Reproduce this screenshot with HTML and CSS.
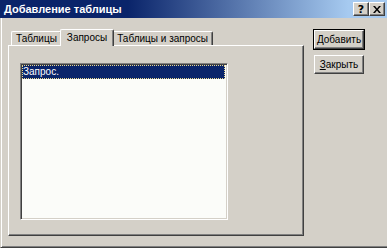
FILE: index.html
```html
<!DOCTYPE html>
<html lang="ru">

<head>
    <meta charset="UTF-8">
    <title>Добавление таблицы</title>
    <link rel="stylesheet" href="styles.css">
</head>

<body>
    <div class="window">
        <div class="titlebar">
            <span class="caption">Добавление таблицы</span>
            <div class="caption-buttons">
                <button class="cap-btn help">?</button>
                <button class="cap-btn close">
                    <svg width="8" height="7" viewBox="0 0 8 7">
                        <path d="M0 0h2l2 2.5 2-2.5h2l-3 3.5 3 3.5h-2l-2-2.5-2 2.5h-2l3-3.5z" fill="#000"/>
                    </svg>
                </button>
            </div>
        </div>
        <div class="client">
            <div class="left">
                <div class="tabs">
                    <div class="tab">Таблицы</div>
                    <div class="tab active">Запросы</div>
                    <div class="tab">Таблицы и запросы</div>
                </div>
                <div class="panel">
                    <div class="listbox">
                        <div class="item selected">Запрос.</div>
                    </div>
                </div>
            </div>
            <div class="actions">
                <button class="btn default"><u>Д</u>обавить</button>
                <button class="btn"><u>З</u>акрыть</button>
            </div>
        </div>
    </div>
</body>

</html>
```

FILE: styles.css
```css
body {
    margin: 0;
    font-family: "Liberation Sans", Arial, sans-serif;
    font-size: 10px;
    background-color: #d4d0c8;
}

.window {
    width: 387px;
    height: 248px;
    display: flex;
    flex-direction: column;
    background-color: #d4d0c8;
    overflow: hidden;
}

/* title bar */
.titlebar {
    height: 18px;
    flex: none;
    display: flex;
    align-items: center;
    justify-content: space-between;
    padding: 0 2px 0 4px;
    background: linear-gradient(to right, #0a246a 0%, #0a246a 33%, #a6caf0 90%, #a6caf0 100%);
    color: #ffffff;
}

.caption {
    font-weight: bold;
    font-size: 11px;
}

.caption-buttons {
    display: flex;
}

.cap-btn {
    width: 16px;
    height: 14px;
    padding: 0;
    display: flex;
    align-items: center;
    justify-content: center;
    background-color: #d4d0c8;
    border: 1px solid;
    border-color: #ffffff #404040 #404040 #ffffff;
    box-shadow: inset -1px -1px #808080;
    font-family: "DejaVu Sans", sans-serif;
    font-weight: bold;
    font-size: 11px;
    color: #000000;
}

/* client area */
.client {
    flex: 1;
    display: flex;
    padding: 11px 0 0 7px;
    border-left: 1px solid #d4d0c8;
    border-bottom: 1px solid #404040;
    box-shadow: inset 1px 0 #ffffff, inset 0 -1px #808080;
}

.left {
    width: 296px;
    display: flex;
    flex-direction: column;
}

.tabs {
    display: flex;
    align-items: flex-end;
    height: 16px;
    padding-left: 3px;
    position: relative;
    z-index: 1;
}

.tab {
    height: 14px;
    box-sizing: border-box;
    padding: 0 4px;
    line-height: 13px;
    border-top: 1px solid #ffffff;
    border-left: 1px solid #ffffff;
    border-right: 1px solid #404040;
    border-radius: 2px 2px 0 0;
    box-shadow: inset -1px 0 #808080;
    background-color: #d4d0c8;
    white-space: nowrap;
}

.tab.active {
    height: 17px;
    margin: 0 -2px -1px;
    padding: 1px 6px 0;
    position: relative;
    z-index: 2;
}

.panel {
    width: 296px;
    height: 191px;
    box-sizing: border-box;
    border: 1px solid;
    border-color: #ffffff #404040 #404040 #ffffff;
    box-shadow: inset -1px -1px #808080;
    padding: 17px 0 0 11px;
}

.listbox {
    width: 208px;
    height: 157px;
    box-sizing: border-box;
    border: 1px solid;
    border-color: #808080 #ffffff #ffffff #808080;
    box-shadow: inset 1px 1px #404040, inset -1px -1px #d4d0c8;
    background-color: #fbfcf9;
    padding: 1px 2px 0 1px;
}

.item {
    height: 14px;
    line-height: 14px;
    padding-left: 1px;
}

.item.selected {
    background-color: #0a246a;
    color: #ffffff;
    outline: 1px dotted #e8d890;
    outline-offset: -1px;
}

/* buttons */
.actions {
    display: flex;
    flex-direction: column;
    align-items: flex-start;
    padding-left: 10px;
}

.btn {
    width: 50px;
    height: 19px;
    box-sizing: border-box;
    padding: 0;
    border: 1px solid;
    border-color: #ffffff #404040 #404040 #ffffff;
    box-shadow: inset -1px -1px #808080;
    background-color: #d4d0c8;
    font-family: "Liberation Sans", Arial, sans-serif;
    font-size: 10px;
    color: #000000;
}

.btn.default {
    margin-top: 1px;
    margin-bottom: 6px;
    outline: 1px solid #000000;
}
```
